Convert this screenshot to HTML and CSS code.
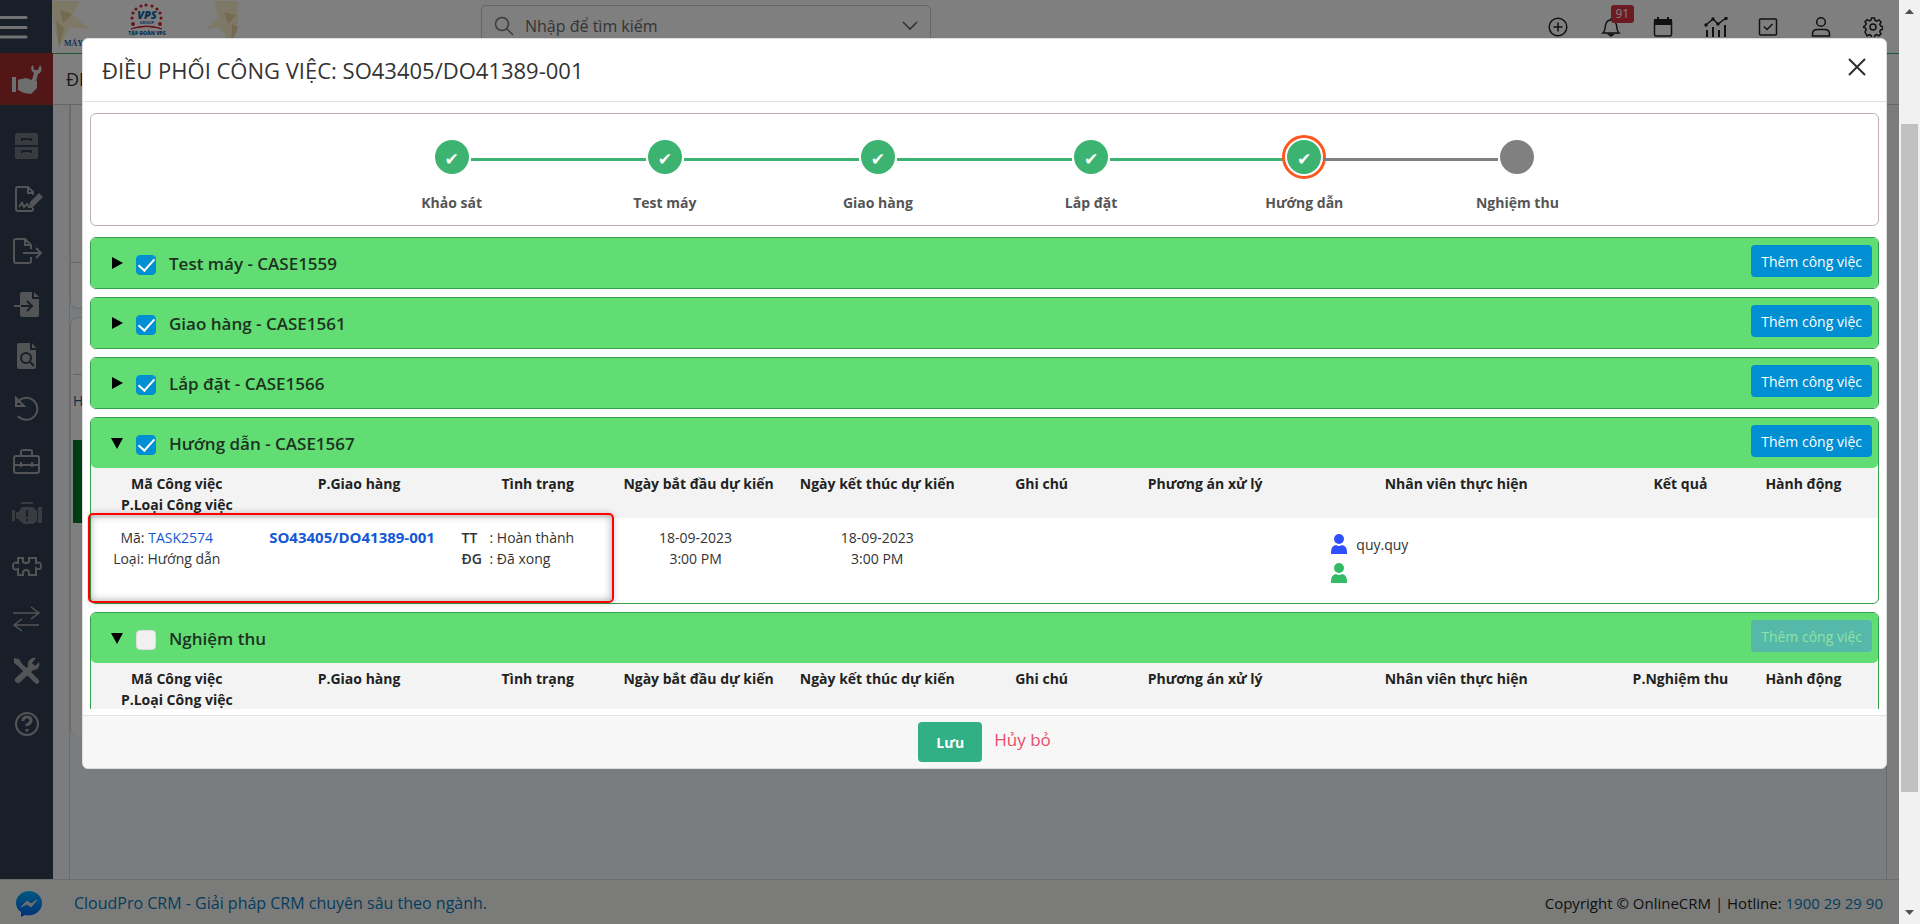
FILE: index.html
```html
<!DOCTYPE html>
<html lang="vi">
<head>
<meta charset="utf-8">
<title>Điều phối công việc</title>
<link rel="stylesheet" href="styles.css">
</head>
<body>
<div class="app">
  <header class="topbar">
    <button class="menu-btn" aria-label="Menu"><svg width="28" height="24" viewBox="0 0 28 24"><path d="M0 2.500h26M0 12.500h26M0 22h26" stroke="#e4e4e4" stroke-width="3.200" stroke-linecap="round"/></svg></button>
    <svg class="logo" width="188" height="52" viewBox="0 0 188 52">
      <path d="M0 1h28l-7 14 17 14-20-2-11 21L0 14z" fill="#fdf1cf"/>
      <path d="M8 10l12 4-9 9zM7 48l-3-28 8 8z" fill="#e6d4a0"/>
      <path d="M162 1h24v20l-7 24-12-18-14 3 13-13z" fill="#fdf1cf"/>
      <path d="M172 12l12 3-8 9zM179 45l1-21 6 3z" fill="#e6d4a0"/>
      <g fill="#d4202c"><circle cx="81" cy="13" r="1.600"/><circle cx="84" cy="9" r="1.600"/><circle cx="89" cy="6" r="1.600"/><circle cx="94" cy="5" r="1.600"/><circle cx="100" cy="6" r="1.600"/><circle cx="105" cy="9" r="1.600"/><circle cx="108" cy="13" r="1.600"/><circle cx="109" cy="18" r="1.600"/><circle cx="80" cy="18" r="1.600"/><circle cx="81" cy="24" r="1.900"/><circle cx="108" cy="24" r="1.900"/></g>
      <text x="95" y="19" class="logo-name" text-anchor="middle">VPS</text>
      <text x="95" y="24" class="logo-sub" text-anchor="middle">GROUP</text>
      <path d="M79 29q16-6 31 0l-3-1q-12-3-25 0z" fill="#d4202c" stroke="#d4202c"/>
      <text x="95" y="35" class="logo-tag" text-anchor="middle">TẬP ĐOÀN VPS</text>
      <text x="12" y="46" class="logo-line">MÁY</text>
    </svg>
    <label class="search">
      <svg width="20" height="20" viewBox="0 0 20 20" fill="none" stroke="#777" stroke-width="1.500"><circle cx="8" cy="8" r="6.500"/><path d="M13 13l6 6"/></svg>
      <input type="text" placeholder="Nhập để tìm kiếm" aria-label="Tìm kiếm">
      <svg width="16" height="10" viewBox="0 0 16 10" fill="none" stroke="#666" stroke-width="1.600"><path d="M1 1l7 7 7-7"/></svg>
    </label>
    <nav class="tools">
      <button aria-label="Thêm"><svg viewBox="0 0 20 20"><circle cx="10" cy="10" r="8.800"/><path d="M10 5.500v9M5.500 10h9"/></svg></button>
      <button aria-label="Thông báo"><svg viewBox="0 0 20 20"><path d="M2 16c3-3 1.500-6 3-9.500C6 4 8 3 10 3s4 1 5 3.500C16.500 10 15 13 18 16zM10 1v2"/><path d="M8 17.500h4l-2 1.500z" fill="#222"/></svg><span class="badge">91</span></button>
      <button aria-label="Lịch"><svg viewBox="0 0 20 20"><rect x="1.500" y="3" width="17" height="16" rx="1.500"/><path d="M2 3h16v4H2zM5 0v3M15 0v3" fill="#222" stroke-width="2"/></svg></button>
      <button aria-label="Báo cáo"><svg class="wide" viewBox="0 0 24 20"><path d="M2 8l7-6 5 5 8-6"/><path d="M3 13v7M9 10v10M15 13v7M21 8v12" stroke-width="2"/><g fill="#222"><circle cx="2" cy="8" r="1"/><circle cx="9" cy="2" r="1"/><circle cx="14" cy="7" r="1"/><circle cx="22" cy="1.500" r="1"/></g></svg></button>
      <button aria-label="Công việc"><svg viewBox="0 0 20 20"><rect x="1.500" y="2" width="17" height="16" rx="1"/><path d="M6 9.500l3 3 5.500-5.500"/></svg></button>
      <button aria-label="Tài khoản"><svg viewBox="0 0 20 20"><circle cx="10" cy="5" r="4.300"/><path d="M1.500 19v-2c0-3 2-4.500 5-4.500h7c3 0 5 1.500 5 4.500v2z"/></svg></button>
      <button aria-label="Cài đặt"><svg viewBox="0 0 20 20"><circle cx="10" cy="10" r="3"/><path d="M8.500 1h3l.6 2.400 1.700.8 2.200-1.300 2.100 2.100-1.300 2.200.8 1.700 1.900.5v3l-2 .5-.7 1.800 1.200 2.100-2.100 2.100-2.100-1.200-1.800.7-.5 2h-3l-.5-2-1.800-.7-2.100 1.200L2 15l1.200-2.300-.7-1.700L.7 10.500v-1l1.800-1.200.7-1.700L2 4.700l2.100-2 2.200 1.200 1.700-.7z"/></svg></button>
    </nav>
  </header>

  <aside class="sidebar">
    <a class="module" href="#" aria-label="Bảo trì"><svg width="32" height="32" viewBox="0 0 32 32" fill="#ddd"><path d="M1 14h4v15H1zM7 17q1-1 4-1l4-1 6 2 5 1v7l-6 6-7-1-6-3z"/><path d="M20 20l3-10c-4-3-3-7-1-8l1 5h4l2-5c3 4 1 8-2 9l-3 11z"/></svg></a>
    <ul class="side-list">
      <li><a href="#" aria-label="Lưu trữ"><svg class="dim" viewBox="0 0 32 32"><path class="f" d="M6 3h19q2 0 2 2v10H4V5q0-2 2-2zM4 17h23v10q0 2-2 2H6q-2 0-2-2z"/><path d="M11 11V9h9v2M11 23v-2h9v2" class="cut"/></svg></a></li>
      <li><a href="#" aria-label="Ký"><svg viewBox="0 0 32 32"><path d="M22 25v1q0 2-2 2H7q-2 0-2-2V6q0-2 2-2h10l5 5v3M17 4v6h5M8 24l3-4 2 4 3-3 2 3h4"/><path class="f" d="M19 19l9-9 4 4-9 9-5 1z"/></svg></a></li>
      <li><a href="#" aria-label="Xuất"><svg viewBox="0 0 32 32"><path d="M20 22v4q0 2-2 2H5q-2 0-2-2V6q0-2 2-2h9l6 6v4M14 4v6h6M12 18h18M25 13l5 5-5 5"/></svg></a></li>
      <li><a href="#" aria-label="Nhập"><svg viewBox="0 0 32 32"><path class="f" d="M10 4h11v7h7v16q0 2-2 2H11q-2 0-2-2V6zM23 4l5 5h-5z"/><path d="M3 18h7" /><path class="cut" d="M10 18h10M16 13l5 5-5 5"/></svg></a></li>
      <li><a href="#" aria-label="Tra cứu"><svg viewBox="0 0 32 32"><path class="f" d="M8 3h11v7h6v17q0 2-2 2H8q-2 0-2-2V5q0-2 2-2zM21 3l4 5h-4z"/><g class="cut"><circle cx="15" cy="18" r="5"/><path d="M19 22l4 4"/></g></svg></a></li>
      <li><a href="#" aria-label="Hoàn tác"><svg viewBox="0 0 32 32"><path d="M6 10a11 11 0 1 1 1 13M5 5v8h8z"/></svg></a></li>
      <li><a href="#" aria-label="Dụng cụ"><svg viewBox="0 0 32 32"><path d="M3 26V13q0-2 2-2h21q2 0 2 2v13q0 2-2 2H5q-2 0-2-2zM3 20h25M10 11V7q0-2 2-2h7q2 0 2 2v4M10 17v5M21 17v5"/></svg></a></li>
      <li><a href="#" aria-label="Động cơ"><svg class="dim" viewBox="0 0 32 32"><path class="f" d="M10 4h12v2H10zM1 12h3v11H1zM5 14h3v7H5zM11 9h11l4 4v10l-4 3H13l-5-4v-9zM27 9h4v16h-4z"/><path class="cut" d="M16 12v7M16 21v2"/></svg></a></li>
      <li><a href="#" aria-label="Tiện ích"><svg viewBox="0 0 32 32"><path d="M7 8h5v2q-1 3 3 3t3-3V8h7v5q5-2 5 3t-5 2v7h-7v-2q0-3-3-3t-3 3v2H7v-6q-5 2-5-3t5-3z"/></svg></a></li>
      <li><a href="#" aria-label="Chuyển đổi"><svg viewBox="0 0 32 32"><path class="thin" d="M2 10h26M20 4l8 6-8 6M28 22H3M11 16l-8 6 8 6"/></svg></a></li>
      <li><a href="#" aria-label="Sửa chữa"><svg viewBox="0 0 32 32"><path d="M7 25L20 13" stroke-width="6" stroke-linecap="round"/><path class="f" d="M3 3l5 1 3 5 8 7 9 9q1 4-3 4L14 18 7 11 3 8zM17 11c-1-5 3-9 8-8l-4 5 3 3 4-4c2 6-4 10-9 7z"/></svg></a></li>
      <li><a href="#" aria-label="Trợ giúp"><svg viewBox="0 0 32 32"><circle cx="16" cy="16" r="11"/><path d="M12 13q0-4 4-4t4 3.500q0 2.500-4 4.500v1M16 21v2.500" stroke-width="3"/></svg></a></li>
    </ul>
  </aside>

  <main class="page">
    <div class="page-title"><h1>ĐIỀU PHỐI</h1></div>
    <div class="page-body">
      <section class="panel panel-first"></section>
      <section class="panel panel-second">
        <div class="panel-head"></div>
        <p>Hạng mục</p>
        <div class="panel-band"></div>
      </section>
    </div>
  </main>

  <footer class="footer">
    <a class="chat" href="#" aria-label="Messenger"><svg width="26" height="26" viewBox="0 0 26 26"><defs><linearGradient id="g" x1="0" y1="0" x2="0" y2="1"><stop offset="0" stop-color="#00b2ff"/><stop offset="1" stop-color="#0062f0"/></linearGradient></defs><path d="M13 0C6 0 0 5 0 12c0 4 2 7 5 9v5l4-2c8 2 17-3 17-12C26 5 20 0 13 0z" fill="url(#g)"/><path d="M5 16l6-6 4 3 6-4-6 7-4-3z" fill="#ddd" stroke="#ddd"/></svg></a>
    <a class="brand" href="#">CloudPro CRM - Giải pháp CRM chuyên sâu theo ngành.</a>
    <p>Copyright © OnlineCRM | Hotline: <a href="#">1900 29 29 90</a></p>
  </footer>

  <div class="backdrop">
    <div class="modal" role="dialog" aria-labelledby="dlg-title">
      <div class="modal-head">
        <h2 id="dlg-title">ĐIỀU PHỐI CÔNG VIỆC: SO43405/DO41389-001</h2>
        <button class="close" aria-label="Đóng"><svg width="18" height="18" viewBox="0 0 18 18" stroke="#2d2d35" stroke-width="2"><path d="M1 1l16 16M17 1L1 17"/></svg></button>
      </div>
      <div class="modal-body">
        <ol class="steps">
          <li><span class="dot">✔</span>Khảo sát</li>
          <li><span class="dot">✔</span>Test máy</li>
          <li><span class="dot">✔</span>Giao hàng</li>
          <li><span class="dot">✔</span>Lắp đặt</li>
          <li class="current"><span class="dot">✔</span>Hướng dẫn</li>
          <li class="todo"><span class="dot"></span>Nghiệm thu</li>
        </ol>

        <section class="case">
          <div class="case-head"><button class="toggle" aria-label="Mở"><svg width="12" height="12" viewBox="0 0 12 12"><path d="M1 0l11 6-11 6z"/></svg></button><input type="checkbox" id="c1" checked><label for="c1">Test máy - CASE1559</label><button class="add">Thêm công việc</button></div>
        </section>
        <section class="case">
          <div class="case-head"><button class="toggle" aria-label="Mở"><svg width="12" height="12" viewBox="0 0 12 12"><path d="M1 0l11 6-11 6z"/></svg></button><input type="checkbox" id="c2" checked><label for="c2">Giao hàng - CASE1561</label><button class="add">Thêm công việc</button></div>
        </section>
        <section class="case">
          <div class="case-head"><button class="toggle" aria-label="Mở"><svg width="12" height="12" viewBox="0 0 12 12"><path d="M1 0l11 6-11 6z"/></svg></button><input type="checkbox" id="c3" checked><label for="c3">Lắp đặt - CASE1566</label><button class="add">Thêm công việc</button></div>
        </section>
        <section class="case">
          <div class="case-head"><button class="toggle" aria-label="Đóng"><svg width="12" height="12" viewBox="0 0 12 12"><path d="M0 1h12L6 12z"/></svg></button><input type="checkbox" id="c4" checked><label for="c4">Hướng dẫn - CASE1567</label><button class="add">Thêm công việc</button></div>
          <table>
            <colgroup><col class="w-code"><col class="w-ship"><col class="w-state"><col class="w-start"><col class="w-end"><col class="w-note"><col class="w-plan"><col class="w-staff"><col class="w-result"><col></colgroup>
            <thead><tr><th>Mã Công việc<br>P.Loại Công việc</th><th>P.Giao hàng</th><th>Tình trạng</th><th>Ngày bắt đầu dự kiến</th><th>Ngày kết thúc dự kiến</th><th>Ghi chú</th><th>Phương án xử lý</th><th>Nhân viên thực hiện</th><th>Kết quả</th><th>Hành động</th></tr></thead>
            <tbody><tr>
              <td class="code">Mã: <a href="#">TASK2574</a><br>Loại: Hướng dẫn</td>
              <td class="ship"><a href="#"><b>SO43405/DO41389-001</b></a></td>
              <td class="state"><dl><dt>TT</dt><dd>: Hoàn thành</dd><dt>ĐG</dt><dd>: Đã xong</dd></dl></td>
              <td class="date">18-09-2023<br>3:00 PM</td>
              <td>18-09-2023<br>3:00 PM</td>
              <td></td><td></td>
              <td class="staff">
                <div><svg width="16" height="20" viewBox="0 0 16 20" fill="#3050ff"><circle cx="8" cy="5" r="5"/><path d="M0 20v-2q0-6 5-7 3 2 6 0 5 1 5 7v2z"/></svg>quy.quy</div>
                <div><svg width="16" height="20" viewBox="0 0 16 20" fill="#33bb66"><circle cx="8" cy="5" r="5"/><path d="M0 20v-2q0-6 5-7 3 2 6 0 5 1 5 7v2z"/></svg></div>
              </td>
              <td></td><td></td>
            </tr></tbody>
          </table>
          <div class="highlight"></div>
        </section>
        <section class="case">
          <div class="case-head"><button class="toggle" aria-label="Đóng"><svg width="12" height="12" viewBox="0 0 12 12"><path d="M0 1h12L6 12z"/></svg></button><input type="checkbox" id="c5"><label for="c5">Nghiệm thu</label><button class="add" disabled>Thêm công việc</button></div>
          <table>
            <colgroup><col class="w-code"><col class="w-ship"><col class="w-state"><col class="w-start"><col class="w-end"><col class="w-note"><col class="w-plan"><col class="w-staff"><col class="w-result"><col></colgroup>
            <thead><tr><th>Mã Công việc<br>P.Loại Công việc</th><th>P.Giao hàng</th><th>Tình trạng</th><th>Ngày bắt đầu dự kiến</th><th>Ngày kết thúc dự kiến</th><th>Ghi chú</th><th>Phương án xử lý</th><th>Nhân viên thực hiện</th><th>P.Nghiệm thu</th><th>Hành động</th></tr></thead>
          </table>
        </section>
      </div>
      <div class="modal-foot">
        <button class="save">Lưu</button>
        <a class="cancel" href="#">Hủy bỏ</a>
      </div>
    </div>
  </div>
</div>
<div class="scrollbar" aria-hidden="true">
  <svg width="9" height="5" viewBox="0 0 9 5"><path d="M0 5l4.500-5L9 5z" fill="#505050"/></svg>
  <div class="track"><div class="thumb"></div></div>
  <svg width="9" height="5" viewBox="0 0 9 5"><path d="M0 0l4.500 5L9 0z" fill="#505050"/></svg>
</div>
</body>
</html>
```
FILE: styles.css
```css
* { box-sizing: border-box; }
body {
  margin: 0;
  height: 100vh;
  display: flex;
  overflow: hidden;
  font: 14px/21px "Segoe UI", "Open Sans", "Noto Sans", sans-serif;
  color: #333;
}
button, input { font: inherit; color: inherit; }
button { border: 0; padding: 0; background: none; cursor: pointer; }
a { text-decoration: none; color: #1558d6; }
h1, h2, p, ul, ol, dl, dd { margin: 0; padding: 0; }
ul, ol { list-style: none; }
svg { flex: none; display: block; }

.app {
  flex: 1;
  min-width: 0;
  position: relative;
  display: grid;
  grid-template: "top top" 53px "side page" 1fr "foot foot" 45px / 53px 1fr;
  background: #f7f9fc;
}

/* top bar */
.topbar { grid-area: top; display: flex; align-items: flex-start; background: #fff; }
.menu-btn { width: 52px; height: 53px; background: #303e50; display: flex; align-items: center; }
.logo-name { font: italic 900 11px "Open Sans", sans-serif; fill: #1565a8; }
.logo-sub { font: 700 4px "Open Sans", sans-serif; fill: #1565a8; }
.logo-tag { font: 800 5px "Open Sans", sans-serif; fill: #1565a8; }
.logo-line { font: 700 8px "Liberation Serif", serif; fill: #1565a8; }
.search {
  width: 450px;
  height: 42px;
  margin: 5px 0 0 241px;
  padding: 0 12px;
  display: flex;
  align-items: center;
  gap: 9px;
  border: 1px solid #ccc;
  border-radius: 4px;
}
.search input { flex: 1; min-width: 0; border: 0; outline: 0; background: none; font-size: 16px; }
.search input::placeholder { color: #6a6a6a; opacity: 1; }
.tools { width: 343px; margin: 13px 12px 0 auto; display: flex; justify-content: space-between; }
.tools button { position: relative; width: 28px; height: 28px; display: grid; place-items: center; }
.tools svg { width: 20px; height: 20px; fill: none; stroke: #222; stroke-width: 1.5px; }
.tools svg.wide { width: 24px; }
.badge {
  position: absolute;
  left: 14px;
  top: -8px;
  padding: 0 5px;
  border-radius: 3px;
  background: #dc3545;
  color: #fff;
  font-size: 12px;
  line-height: 18px;
}

/* sidebar */
.sidebar { grid-area: side; background: #303e50; }
.module { height: 52px; display: grid; place-items: center; background: #a42c2e; }
.side-list { padding-top: 15px; }
.side-list li { height: 52px; }
.side-list li:nth-child(even) { height: 53px; }
.side-list a { height: 100%; display: grid; place-items: center; }
.side-list svg { width: 32px; height: 32px; fill: none; stroke: #a6a8aa; stroke-width: 2px; }
.side-list .dim { opacity: .55; }
.side-list .f { fill: #a6a8aa; stroke: none; }
.side-list .cut { stroke: #303e50; }
.side-list .thin { stroke-width: 1.5px; }

/* page behind the dialog */
.page { grid-area: page; display: flex; flex-direction: column; border-top: 1px solid #38b068; }
.page-title { height: 51px; padding-left: 13px; display: flex; align-items: center; background: #fff; border-bottom: 1px solid #ccc; }
.page-title h1 { font-size: 18px; font-weight: 500; white-space: nowrap; }
.page-body { flex: 1; margin: 0 12px 0 16px; border: solid #d4d6d9; border-width: 0 1px; display: flex; flex-direction: column; gap: 8px; }
.panel { background: #fff; border-radius: 8px; border: 1px solid #d4d6d9; }
.panel-first { height: 204px; border-top: 0; border-radius: 0 0 8px 8px; }
.panel-first::after { content: ""; display: block; height: 157px; border-bottom: 1px solid #ccc; }
.panel-second { height: 419px; padding-left: 2px; border-bottom: 0; }
.panel-head { height: 57px; border-bottom: 1px solid #ccc; }
.panel-second p { padding: 15px 0 29px; color: #1a6090; line-height: 21px; }
.panel-band { height: 83px; background: #007a28; }

/* footer */
.footer { grid-area: foot; display: flex; align-items: center; padding: 3px 16px 0; background: #f6f9f5; border-top: 1px solid #d8d8d8; font-size: 15px; color: #222; }
.brand { margin: 0 auto 0 32px; font-size: 16px; }
.footer a { color: #0a78b8; }

/* dialog */
.backdrop { position: absolute; inset: 0; padding: 38px 12px 0 82px; background: rgba(0, 0, 0, .5); }
.modal { border: 1px solid #ddd; border-radius: 6px; background: #fff; overflow: hidden; }
.modal-head { height: 63px; padding: 0 20px 0 19px; display: flex; align-items: center; justify-content: space-between; border-bottom: 1px solid #e2e2e2; }
.modal-head h2 { font-size: 22px; line-height: 30px; font-weight: 400; }
.close { width: 18px; height: 24px; padding-bottom: 6px; }
.modal-body { margin: 11px 7px 6px 4px; padding-left: 3px; max-height: calc(100vh - 328px); overflow: hidden; }

.steps { height: 113px; margin-bottom: 11px; padding: 26px 14.2% 0; display: flex; border: 1px solid #c0b0b4; border-radius: 6px; }
.steps li { flex: 1; position: relative; display: flex; flex-direction: column; align-items: center; gap: 18px; font-weight: 700; color: #555; }
.steps li + li::before { content: ""; position: absolute; top: 18px; right: calc(50% + 19px); width: calc(100% - 38px); height: 3px; background: #3cb371; }
.steps .todo::before { background: #808080; }
.dot { width: 34px; height: 34px; border-radius: 50%; background: #3cb371; color: #fff; font: 17px/38px "DejaVu Sans", sans-serif; text-align: center; }
.current .dot { position: relative; outline: 3px solid #ff5722; outline-offset: 2px; box-shadow: 0 0 0 2px #fff; }
.todo .dot { background: #808080; }

.case { position: relative; margin-bottom: 8px; border: 1px solid #35a04c; border-radius: 6px; }
.case-head { height: 50px; padding: 0 6px 0 20px; display: flex; align-items: center; border-radius: 5px; background: #61dd74; }
.toggle { width: 12px; height: 20px; display: grid; place-items: center; }
.case-head input { appearance: none; flex: none; width: 20px; height: 20px; margin: 3px 13px 0; border: 1px solid #ddd; border-radius: 4px; background: #f0f0f0; display: grid; place-items: center; }
.case-head input:checked { border-color: #008fd3; background: #008fd3; }
.case-head input:checked::after { content: ""; width: 7px; height: 14px; margin-top: -4px; border: solid #fff; border-width: 0 2px 2px 0; rotate: 42deg; }
.case-head label { font-size: 17px; font-weight: 600; color: #1c3320; }
.add { height: 32px; margin: 0 0 4px auto; padding: 0 10px; border-radius: 4px; background: #008fd3; color: #fff; }
.add:disabled { background: #56b8a8; color: #8fe3a4; }

table { width: 100%; table-layout: fixed; border-collapse: collapse; }
th, td { padding: 0; vertical-align: top; text-align: center; }
th { height: 50px; padding-top: 5px; background: #f3f3f3; color: #222; font-weight: 700; white-space: nowrap; }
th:last-child { padding-right: 24px; }
td { height: 85px; padding-top: 9px; }
.w-code { width: 9.6%; }
.w-ship { width: 10.8%; }
.w-state { width: 9.2%; }
.w-start { width: 8.8%; }
.w-end { width: 11.2%; }
.w-note { width: 7.2%; }
.w-plan { width: 11.1%; }
.w-staff { width: 17%; }
.w-result { width: 8.1%; }
td.code { padding-right: 20px; }
td.ship { padding-right: 14px; font-size: 15px; }
td.date { padding-right: 6px; }
dl { display: grid; grid-template-columns: 28px 1fr; padding-left: 6px; text-align: left; }
dt { font-weight: 600; }
td.staff { padding: 16px 0 0 27px; }
.staff div { height: 29px; display: flex; align-items: flex-start; gap: 9px; }
.highlight { position: absolute; left: -3px; bottom: 0; width: 526px; height: 90px; border: 2px solid #f00; border-radius: 5px; box-shadow: inset 0 0 8px rgba(0, 0, 0, .35), 0 0 6px rgba(0, 0, 0, .2); }

.modal-foot { padding: 6px 0; display: flex; justify-content: center; gap: 12px; border-top: 1px solid #e2e2e2; background: #f7f7f7; }
.save { width: 64px; height: 40px; border-radius: 4px; background: #31b085; color: #fff; font-weight: 700; }
.cancel { color: #ea4c68; font-size: 17px; line-height: 36px; }

/* window scrollbar */
.scrollbar { width: 21px; display: flex; flex-direction: column; align-items: center; padding: 9px 0; background: #f1f1f1; }
.track { flex: 1; width: 17px; padding-top: 110px; }
.thumb { height: 85%; background: #c1c1c1; }
```
